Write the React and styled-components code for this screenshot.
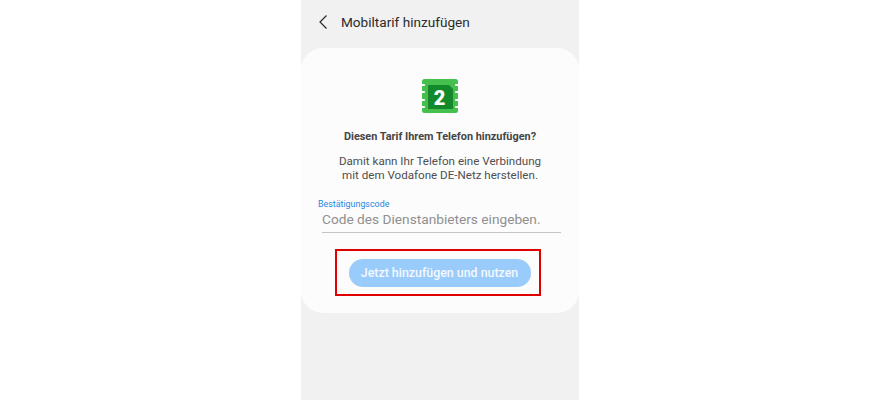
import styled, { createGlobalStyle } from "styled-components";

const GlobalStyle = createGlobalStyle`
  html, body {
    margin: 0;
    padding: 0;
    background: #ffffff;
  }
`;

export default function App() {
  return (
    <>
      <GlobalStyle />
      <Page>
        <Phone>
          <Header>
            <BackIcon width="12" height="16" viewBox="0 0 12 16">
              <path d="M9.5 1.5 L3 8 L9.5 14.5" fill="none" stroke="#2a2a2a" strokeWidth="1.2" />
            </BackIcon>
            <HeaderTitle>Mobiltarif hinzufügen</HeaderTitle>
          </Header>
          <Card>
            <SimIcon width="38" height="36" viewBox="0 0 38 36">
              <rect x="1" y="1" width="36" height="34" rx="2.5" fill="#45c04f" />
              <rect x="0" y="6" width="4" height="2" rx="1" fill="#ffffff" />
              <rect x="0" y="13" width="4" height="2" rx="1" fill="#ffffff" />
              <rect x="0" y="21" width="4" height="2" rx="1" fill="#ffffff" />
              <rect x="0" y="28" width="4" height="2" rx="1" fill="#ffffff" />
              <rect x="34" y="6" width="4" height="2" rx="1" fill="#ffffff" />
              <rect x="34" y="13" width="4" height="2" rx="1" fill="#ffffff" />
              <rect x="34" y="21" width="4" height="2" rx="1" fill="#ffffff" />
              <rect x="34" y="28" width="4" height="2" rx="1" fill="#ffffff" />
              <path d="M7 7 H28 L32 11 V31 H7 Z" fill="#14892c" />
              <text x="18.5" y="26.5" textAnchor="middle" fill="#ffffff" fontFamily="Roboto, sans-serif" fontWeight="900" fontSize="20">2</text>
            </SimIcon>
            <Question>Diesen Tarif Ihrem Telefon hinzufügen?</Question>
            <Description>
              Damit kann Ihr Telefon eine Verbindung
              <br />
              mit dem Vodafone DE-Netz herstellen.
            </Description>
            <Field>
              <FieldLabel>Bestätigungscode</FieldLabel>
              <FieldHint>Code des Dienstanbieters eingeben.</FieldHint>
            </Field>
            <Highlight>
              <AddButton>Jetzt hinzufügen und nutzen</AddButton>
            </Highlight>
          </Card>
        </Phone>
      </Page>
    </>
  );
}

const Page = styled.div`
  width: 879px;
  height: 400px;
  display: flex;
  justify-content: center;
  overflow: hidden;
  padding-left: 1px;
  box-sizing: border-box;
  font-family: Roboto, "Liberation Sans", sans-serif;
`;

const Phone = styled.div`
  width: 278px;
  height: 400px;
  background: #f1f1f1;
  display: flex;
  flex-direction: column;
`;

const Header = styled.div`
  height: 48px;
  flex: none;
  display: flex;
  align-items: center;
  padding: 0 0 4px 16px;
  box-sizing: border-box;
  gap: 12px;
`;

const BackIcon = styled.svg`
  flex: none;
`;

const HeaderTitle = styled.span`
  font-size: 13.6px;
  color: #2b2b2b;
`;

const Card = styled.div`
  height: 265px;
  flex: none;
  background: #fcfcfc;
  border-radius: 22px;
  display: flex;
  flex-direction: column;
  align-items: center;
  padding-top: 30px;
  box-sizing: border-box;
`;

const SimIcon = styled.svg`
  flex: none;
  margin-left: -1px;
`;

const Question = styled.div`
  margin-top: 15px;
  font-size: 10.9px;
  line-height: 16px;
  font-weight: 700;
  color: #454545;
`;

const Description = styled.div`
  margin-top: 9px;
  font-size: 11.6px;
  line-height: 14px;
  color: #4f4f4f;
  text-align: center;
`;

const Field = styled.div`
  align-self: stretch;
  margin: 17px 18px 0 17px;
  display: flex;
  flex-direction: column;
`;

const FieldLabel = styled.div`
  font-size: 8.9px;
  line-height: 11px;
  color: #1f88e5;
`;

const FieldHint = styled.div`
  margin-left: 4px;
  font-size: 13.7px;
  line-height: 19px;
  color: #8f8f8f;
  border-bottom: 1px solid #c4c4c4;
  padding-bottom: 3px;
`;

const Highlight = styled.div`
  margin: 16px 4px 0 0;
  width: 206px;
  height: 47px;
  padding-left: 3px;
  border: 2px solid #e00000;
  box-sizing: border-box;
  display: flex;
  align-items: center;
  justify-content: center;
`;

const AddButton = styled.div`
  width: 182px;
  height: 28px;
  border-radius: 14px;
  background: #99cbfb;
  color: #f4f9ff;
  font-size: 12.4px;
  font-weight: 500;
  display: flex;
  align-items: center;
  justify-content: center;
`;
